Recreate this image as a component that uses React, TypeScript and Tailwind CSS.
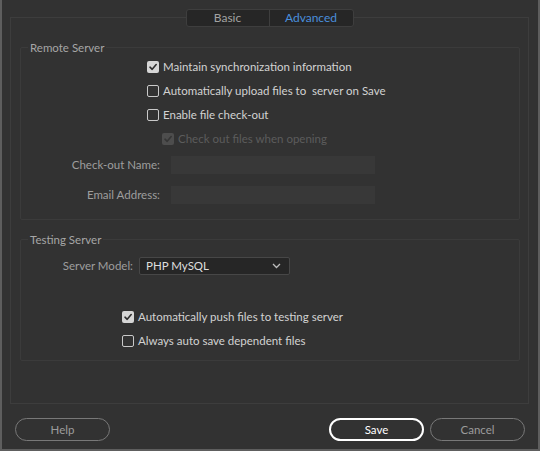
import type { ReactNode } from 'react'

function CheckMark({ color }: { color: string }) {
  return (
    <svg width="10" height="10" viewBox="0 0 10 10" className="block">
      <path d="M2 5.2 L4.2 7.3 L8.2 2.6" fill="none" stroke={color} strokeWidth="1.6" strokeLinecap="round" strokeLinejoin="round" />
    </svg>
  )
}

interface CheckRowProps {
  label: string
  checked?: boolean
  disabled?: boolean
  pad: string
}

function CheckRow({ label, checked, disabled, pad }: CheckRowProps) {
  let box = 'border border-[#c9c9c9]'
  if (checked && !disabled) box = 'bg-[#d6d6d6]'
  if (disabled) box = 'bg-[#4d4d4d]'
  return (
    <div className={`h-[24px] flex items-center ${pad}`}>
      <span className={`w-[12px] h-[12px] rounded-[2px] flex items-center justify-center shrink-0 ${box}`}>
        {checked && <CheckMark color={disabled ? '#353535' : '#2e2e2e'} />}
      </span>
      <span className={`ml-[4px] whitespace-pre ${disabled ? 'text-[#5c5c5c]' : 'text-[#d2d2d2]'}`}>{label}</span>
    </div>
  )
}

function Group({ title, className, children }: { title: string; className: string; children: ReactNode }) {
  return (
    <div className={`ml-[9px] w-[500px] border border-[#3b3b3b] rounded-[2px] ${className}`}>
      <div className="-mt-[8px] ml-[7px] px-[2px] w-fit h-[16px] leading-[16px] bg-[#323232] text-[#a6a6a6]">{title}</div>
      {children}
    </div>
  )
}

function PillButton({ label, primary }: { label: string; primary?: boolean }) {
  return (
    <button
      className={`h-[23px] w-[95px] rounded-full flex items-center justify-center ${
        primary ? 'border-2 border-white text-white' : 'border border-[#787878] text-[#9c9c9c]'
      }`}
    >
      {label}
    </button>
  )
}

export default function App() {
  return (
    <div
      className="w-[540px] h-[451px] bg-[#323232] border-x-2 border-b-2 border-[#5e5e5e] flex flex-col text-[11.5px]"
      style={{ fontFamily: 'Lato, "Noto Sans", sans-serif' }}
    >
      <div className="mt-[17px] ml-[8px] w-[519px] h-[387px] border border-[#3d3d3d] flex flex-col">
        <div className="-mt-[9px] flex justify-center">
          <div className="flex h-[18px] rounded-[3px] border border-[#3e3e3e] bg-[#262626] overflow-hidden text-[12px]">
            <div className="w-[83px] flex items-center justify-center text-[#a3a3a3] border-r border-[#3e3e3e]">Basic</div>
            <div className="w-[83px] flex items-center justify-center text-[#4a8fdc]">Advanced</div>
          </div>
        </div>

        <Group title="Remote Server" className="mt-[20px] pb-[15px]">
          <div className="-mt-[1px]">
            <CheckRow pad="pl-[126px]" checked label="Maintain synchronization information" />
            <CheckRow pad="pl-[126px]" label="Automatically upload files to  server on Save" />
            <CheckRow pad="pl-[126px]" label="Enable file check-out" />
            <CheckRow pad="pl-[141px]" checked disabled label="Check out files when opening" />
          </div>
          <div className="mt-[5px] flex items-center">
            <div className="w-[139px] text-right text-[#9e9e9e]">Check-out Name:</div>
            <div className="ml-[11px] w-[204px] h-[18px] bg-[#383838]" />
          </div>
          <div className="mt-[12px] flex items-center">
            <div className="w-[139px] text-right text-[#9e9e9e]">Email Address:</div>
            <div className="ml-[11px] w-[204px] h-[18px] bg-[#383838]" />
          </div>
        </Group>

        <Group title="Testing Server" className="mt-[19px] pb-[7px]">
          <div className="mt-[9px] flex items-center">
            <div className="w-[112px] text-right text-[#9e9e9e]">Server Model:</div>
            <div className="ml-[6px] w-[151px] h-[18px] bg-[#262626] border border-[#474747] rounded-[2px] flex items-center justify-between pl-[6px] pr-[8px] text-[#dedede]">
              <span>PHP MySQL</span>
              <svg width="9" height="6" viewBox="0 0 9 6">
                <path d="M1 1 L4.5 4.5 L8 1" fill="none" stroke="#bdbdbd" strokeWidth="1.3" />
              </svg>
            </div>
          </div>
          <div className="mt-[30px]">
            <CheckRow pad="pl-[101px]" checked label="Automatically push files to testing server" />
            <CheckRow pad="pl-[101px]" label="Always auto save dependent files" />
          </div>
        </Group>
      </div>

      <div className="mt-[14px] flex items-center pl-[13px] pr-[13px]">
        <PillButton label="Help" />
        <div className="flex-1" />
        <PillButton label="Save" primary />
        <div className="w-[6px]" />
        <PillButton label="Cancel" />
      </div>
    </div>
  )
}
